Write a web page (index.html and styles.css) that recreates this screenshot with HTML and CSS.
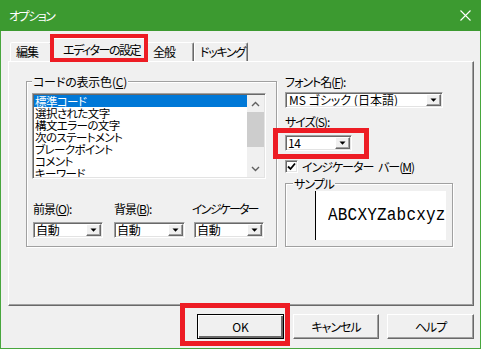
FILE: index.html
```html
<!DOCTYPE html>
<html lang="ja">
<head>
<meta charset="utf-8">
<title>オプション</title>
<link rel="stylesheet" href="styles.css">
</head>
<body>
<div class="window">
  <div class="titlebar">
    <span class="title">オプション</span>
    <svg class="close" width="11" height="11" viewBox="0 0 11 11"><path d="M0.5 0.5L10.5 10.5M10.5 0.5L0.5 10.5" stroke="#fff" stroke-width="1.1" fill="none"/></svg>
  </div>
  <div class="client">
    <div class="tabs">
      <div class="tab tab-edit">編集</div>
      <div class="tab tab-sel">エディターの設定</div>
      <div class="tab tab-gen">全般</div>
      <div class="tab tab-dock">ドッキング</div>
    </div>
    <div class="panel">
      <div class="group code-group">
        <span class="legend legend-code">コードの表示色(<u>C</u>)</span>
        <div class="listbox">
          <ul class="items">
            <li class="sel">標準コード</li>
            <li>選択された文字</li>
            <li>構文エラーの文字</li>
            <li>次のステートメント</li>
            <li>ブレークポイント</li>
            <li>コメント</li>
            <li>キーワード</li>
          </ul>
          <div class="vscroll">
            <div class="sb-btn"><svg width="9" height="6" viewBox="0 0 9 6"><path d="M1 5L4.5 1.5L8 5" stroke="#606060" stroke-width="1.4" fill="none"/></svg></div>
            <div class="sb-thumb"></div>
            <div class="sb-track"></div>
            <div class="sb-btn"><svg width="9" height="6" viewBox="0 0 9 6"><path d="M1 1L4.5 4.5L8 1" stroke="#606060" stroke-width="1.4" fill="none"/></svg></div>
          </div>
        </div>
        <div class="colors">
          <div class="color-col col-fg">
            <span class="lbl">前景(<u>O</u>):</span>
            <div class="combo"><span class="combo-text">自動</span><span class="combo-btn"><svg width="7" height="4" viewBox="0 0 7 4"><path d="M0.5 0.5H6.5L3.5 3.8Z" fill="#000"/></svg></span></div>
          </div>
          <div class="color-col col-bg">
            <span class="lbl">背景(<u>B</u>):</span>
            <div class="combo"><span class="combo-text">自動</span><span class="combo-btn"><svg width="7" height="4" viewBox="0 0 7 4"><path d="M0.5 0.5H6.5L3.5 3.8Z" fill="#000"/></svg></span></div>
          </div>
          <div class="color-col col-ind">
            <span class="lbl lbl-ind">インジケーター</span>
            <div class="combo"><span class="combo-text">自動</span><span class="combo-btn"><svg width="7" height="4" viewBox="0 0 7 4"><path d="M0.5 0.5H6.5L3.5 3.8Z" fill="#000"/></svg></span></div>
          </div>
        </div>
      </div>
      <div class="right-col">
        <span class="lbl lbl-font">フォント名(<u>F</u>):</span>
        <div class="combo combo-font"><span class="combo-text">MS ゴシック (日本語)</span><span class="combo-btn"><svg width="7" height="4" viewBox="0 0 7 4"><path d="M0.5 0.5H6.5L3.5 3.8Z" fill="#000"/></svg></span></div>
        <span class="lbl lbl-size">サイズ(<u>S</u>):</span>
        <div class="combo combo-size"><span class="combo-text">14</span><span class="combo-btn"><svg width="7" height="4" viewBox="0 0 7 4"><path d="M0.5 0.5H6.5L3.5 3.8Z" fill="#000"/></svg></span></div>
        <div class="check-row">
          <span class="checkbox"><svg width="9" height="9" viewBox="0 0 9 9"><path d="M1 4.5L3.5 7L8 1.5" stroke="#000" stroke-width="1.8" fill="none"/></svg></span>
          <span class="check-label">インジケーター バー(<u>M</u>)</span>
        </div>
        <div class="group sample-group">
          <span class="legend">サンプル</span>
          <div class="sample">
            <div class="gutter"></div>
            <div class="sample-text"><span>ABCXYZabcxyz</span></div>
          </div>
        </div>
      </div>
    </div>
    <div class="buttons">
      <button class="btn btn-ok">OK</button>
      <button class="btn btn-cancel">キャンセル</button>
      <button class="btn btn-help">ヘルプ</button>
    </div>
  </div>
  <div class="mark mark-tab"></div>
  <div class="mark mark-size"></div>
  <div class="mark mark-ok"></div>
</div>
</body>
</html>
```

FILE: styles.css
```css
* { box-sizing: border-box; margin: 0; padding: 0; }
html, body { width: 481px; height: 349px; overflow: hidden; background: #f0f0f0; }
body {
  font-family: "Noto Sans CJK JP", sans-serif;
  font-size: 12px;
  line-height: 13px;
  color: #000;
  font-feature-settings: "palt";
  letter-spacing: -1px;
}
u { text-decoration: underline; text-underline-offset: 1px; }

.window {
  position: relative;
  width: 481px;
  height: 349px;
  display: flex;
  flex-direction: column;
  background: #f0f0f0;
  border: 1px solid #48a63d;
  border-top: 0;
}

.titlebar {
  height: 31px;
  margin: 0 -1px;
  background: #3c9a30;
  display: flex;
  align-items: center;
  padding: 0 10px 0 9px;
  color: #fff;
  flex: none;
}
.title { font-size: 12px; line-height: 14px; letter-spacing: -1.5px; }
.close { margin-left: auto; }

.client {
  flex: 1;
  display: flex;
  flex-direction: column;
  padding: 7px 6px 0 7px;
}

/* tabs */
.tabs {
  height: 23px;
  display: flex;
  align-items: flex-end;
  padding-left: 2px;
  flex: none;
}
.tab {
  height: 19px;
  padding: 2px 0 0 5px;
  border: 1px solid;
  border-bottom: 0;
  border-color: #fff #696969 transparent #fff;
  box-shadow: inset -1px 0 0 #a0a0a0;
  border-radius: 2px 2px 0 0;
  background: #f0f0f0;
  white-space: nowrap;
}
.tab-edit { width: 42px; }
.tab-sel {
  width: 98px;
  height: 24px;
  margin: 0 -2px -1px;
  padding: 4px 0 0 12px;
  letter-spacing: -1.5px;
  position: relative;
  z-index: 1;
}
.tab-gen { width: 48px; padding-left: 6px; }
.tab-dock { width: 54px; letter-spacing: -1.3px; }

/* panel */
.panel {
  width: 466px;
  height: 245px;
  border: 1px solid;
  border-color: #fff #696969 #696969 #fff;
  box-shadow: inset -1px -1px 0 #a0a0a0;
  display: flex;
  align-items: flex-start;
  flex: none;
}

.group {
  border: 1px solid #a0a0a0;
  box-shadow: inset 1px 1px 0 #fff, 1px 1px 0 #fff;
}
.legend {
  display: block;
  width: max-content;
  height: 13px;
  line-height: 13px;
  margin: -7px 0 0 5px;
  padding: 0 1px;
  background: #f0f0f0;
}
.legend-code { letter-spacing: -0.2px; }

.code-group {
  width: 251px;
  height: 166px;
  margin: 19px 0 0 17px;
}

.listbox {
  width: 234px;
  height: 86px;
  margin: 5px 0 0 5px;
  border: 1px solid;
  border-color: #a0a0a0 #fff #fff #a0a0a0;
  box-shadow: inset 1px 1px 0 #696969, inset -1px -1px 0 #e3e3e3;
  padding: 1px;
  display: flex;
}
.items {
  flex: 1;
  list-style: none;
  background: #fff;
  overflow: hidden;
}
.items li {
  height: 12px;
  line-height: 12px;
  padding-left: 1px;
  font-size: 11.5px;
  letter-spacing: -0.6px;
  white-space: nowrap;
}
.items li.sel { background: #0078d7; color: #fff; }

.vscroll {
  width: 17px;
  display: flex;
  flex-direction: column;
  background: #f0f0f0;
}
.sb-btn {
  height: 17px;
  display: flex;
  align-items: center;
  justify-content: center;
  flex: none;
}
.sb-thumb { height: 35px; background: #cdcdcd; flex: none; }
.sb-track { flex: 1; }

.colors {
  display: flex;
  margin: 23px 0 0 6px;
}
.color-col { display: flex; flex-direction: column; }
.col-fg .combo { width: 70px; }
.col-bg { margin-left: 11px; }
.col-bg .combo { width: 71px; }
.col-ind { margin-left: 9px; }
.col-ind .combo { width: 70px; }
.lbl { display: block; height: 13px; line-height: 13px; white-space: nowrap; }
.lbl-ind { margin-left: -2px; letter-spacing: -1.8px; }
.color-col .combo { margin-top: 7px; }

.combo {
  height: 16px;
  border: 1px solid;
  border-color: #a0a0a0 #fff #fff #a0a0a0;
  box-shadow: inset 1px 1px 0 #696969, inset -1px -1px 0 #e3e3e3;
  padding: 1px;
  display: flex;
}
.combo-text {
  flex: 1;
  background: #fff;
  line-height: 12px;
  padding-left: 1px;
  white-space: nowrap;
  overflow: hidden;
  letter-spacing: -0.3px;
}
.combo-font .combo-text { letter-spacing: 0; padding-left: 2px; }
.combo-btn {
  width: 15px;
  height: 12px;
  background: #f0f0f0;
  border: 1px solid;
  border-color: #fff #696969 #696969 #fff;
  box-shadow: inset -1px -1px 0 #a0a0a0;
  display: flex;
  align-items: flex-end;
  justify-content: center;
  padding-bottom: 3px;
  flex: none;
}

.right-col {
  width: 168px;
  margin-left: 8px;
  display: flex;
  flex-direction: column;
}
.lbl-font { margin-top: 13px; }
.combo-font { width: 158px; margin-top: 4px; }
.lbl-size { margin-top: 7px; }
.combo-size { width: 67px; margin-top: 7px; }

.check-row {
  display: flex;
  align-items: center;
  height: 13px;
  margin-top: 9px;
}
.checkbox {
  width: 13px;
  height: 13px;
  border: 1px solid;
  border-color: #a0a0a0 #fff #fff #a0a0a0;
  box-shadow: inset 1px 1px 0 #696969, inset -1px -1px 0 #e3e3e3;
  background: #fff;
  display: flex;
  align-items: center;
  justify-content: center;
  flex: none;
}
.check-label { margin-left: 4px; white-space: nowrap; line-height: 13px; word-spacing: 3px; }

.sample-group {
  width: 168px;
  height: 64px;
  margin-top: 10px;
}
.sample-group .legend { margin-left: 7px; }
.sample {
  width: 152px;
  height: 49px;
  margin: 1px 0 0 8px;
  display: flex;
  background: #fff;
  overflow: hidden;
}
.gutter {
  width: 22px;
  background: #f0f0f0;
  border-right: 1px solid #000;
  flex: none;
}
.sample-text {
  font-family: "Liberation Mono", "DejaVu Sans Mono", monospace;
  font-feature-settings: normal;
  letter-spacing: 0.2px;
  font-size: 16px;
  line-height: 49px;
  padding-left: 12px;
  white-space: nowrap;
}
.sample-text span { display: inline-block; transform: scaleY(1.18); }

/* buttons */
.buttons {
  display: flex;
  justify-content: flex-end;
  margin-top: 8px;
}
.btn {
  height: 25px;
  font: inherit;
  font-feature-settings: "palt";
  letter-spacing: -1px;
  color: #000;
  background: #f0f0f0;
  border: 1px solid;
  border-color: #fff #696969 #696969 #fff;
  box-shadow: inset -1px -1px 0 #a0a0a0;
  line-height: 13px;
}
.btn-ok {
  width: 87px;
  margin-right: 9px;
  letter-spacing: 0;
  border-color: #000;
  box-shadow: inset 1px 1px 0 #fff, inset -2px -2px 0 #696969, inset -1px -1px 0 #a0a0a0;
}
.btn-cancel { width: 86px; margin-right: 8px; }
.btn-help { width: 87px; }

/* red annotation boxes */
.mark {
  position: absolute;
  border: 5px solid #ed1c24;
  z-index: 5;
}
.mark-tab { left: 49px; top: 34px; width: 98px; height: 28px; border-width: 4px; }
.mark-size { left: 272px; top: 128px; width: 96px; height: 31px; }
.mark-ok { left: 179px; top: 303px; width: 110px; height: 43px; }
```
